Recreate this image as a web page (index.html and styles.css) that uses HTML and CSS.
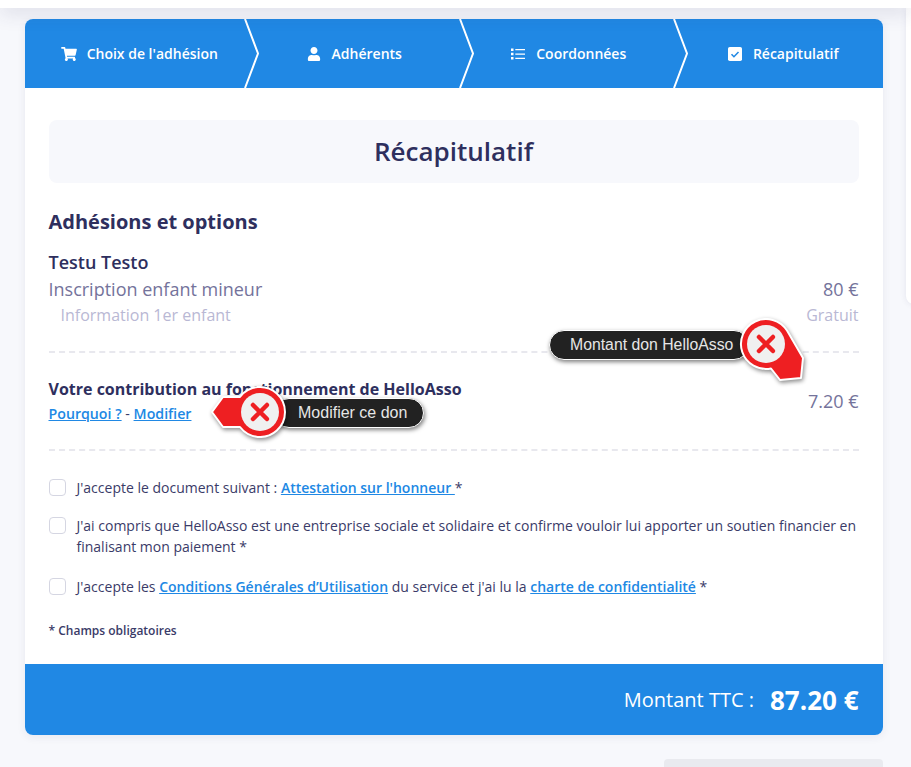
FILE: index.html
```html
<!DOCTYPE html>
<html lang="fr">
<head>
    <meta charset="UTF-8">
    <meta name="viewport" content="width=device-width, initial-scale=1.0">
    <title>Récapitulatif</title>
    <link rel="stylesheet" href="styles.css">
</head>
<body>
    <div class="topbar"></div>
    <div class="side-card"></div>
    <main class="page">
        <section class="card">
            <nav class="steps">
                <div class="step">
                    <svg class="step-icon" viewBox="0 0 576 512"><path fill="#fff" d="M528 301.3l47.3-208C578.7 78.3 567.300 64 552 64H159.200l-9.200-44.800C147.800 8 137.900 0 126.500 0H24C10.700 0 0 10.700 0 24v16c0 13.300 10.700 24 24 24h69.900l70.200 343.400C147.300 417.100 136 435.200 136 456c0 30.900 25.100 56 56 56s56-25.100 56-56c0-15.700-6.400-29.800-16.800-40h209.600C430.400 426.200 424 440.300 424 456c0 30.900 25.100 56 56 56s56-25.100 56-56c0-22.200-12.900-41.300-31.600-50.400l5.500-24.300c3.400-15-8-29.300-23.400-29.300H218.100l-6.500-32h293c11.200 0 20.900-7.800 23.400-18.700z"/></svg>
                    <span>Choix de l'adhésion</span>
                </div>
                <div class="step">
                    <svg class="step-icon" viewBox="0 0 448 512"><path fill="#fff" d="M224 256c70.700 0 128-57.300 128-128S294.700 0 224 0 96 57.300 96 128s57.300 128 128 128zm89.600 32h-16.700c-22.200 10.200-46.900 16-72.900 16s-50.600-5.800-72.900-16h-16.700C60.200 288 0 348.200 0 422.400V464c0 26.500 21.500 48 48 48h352c26.500 0 48-21.500 48-48v-41.600c0-74.200-60.200-134.400-134.400-134.400z"/></svg>
                    <span>Adhérents</span>
                </div>
                <div class="step">
                    <svg class="step-icon" viewBox="0 0 14 14"><path fill="#fff" d="M0 1.500h2.500v2.500H0zM0 5.800h2.500v2.500H0zM0 10h2.500v2.500H0zM4.300 2h9.700v1.300H4.300zM4.300 6.400h9.700v1.300H4.300zM4.300 10.700h9.700V12H4.300z"/></svg>
                    <span>Coordonnées</span>
                </div>
                <div class="step">
                    <svg class="step-icon" viewBox="0 0 12 12"><rect width="12" height="12" rx="1.500" fill="#fff"/><path d="M3 6.200l2.100 2.100L9 4.300" fill="none" stroke="#2088e4" stroke-width="1.300"/></svg>
                    <span>Récapitulatif</span>
                </div>
                <svg class="chevron chevron-1" viewBox="0 0 16 69"><path d="M1 0l13 34.500L1 69" fill="none" stroke="#fff" stroke-width="2"/></svg>
                <svg class="chevron chevron-2" viewBox="0 0 16 69"><path d="M1 0l13 34.500L1 69" fill="none" stroke="#fff" stroke-width="2"/></svg>
                <svg class="chevron chevron-3" viewBox="0 0 16 69"><path d="M1 0l13 34.500L1 69" fill="none" stroke="#fff" stroke-width="2"/></svg>
            </nav>

            <div class="content">
                <h1 class="title">Récapitulatif</h1>
                <h2 class="section-title">Adhésions et options</h2>
                <p class="member">Testu Testo</p>
                <div class="line-row">
                    <span>Inscription enfant mineur</span>
                    <span>80 €</span>
                </div>
                <div class="option-row">
                    <span>Information 1er enfant</span>
                    <span>Gratuit</span>
                </div>
                <div class="contribution">
                    <div>
                        <p class="contribution-title">Votre contribution au fonctionnement de HelloAsso</p>
                        <p class="contribution-links"><a href="#">Pourquoi ?</a> - <a href="#">Modifier</a></p>
                    </div>
                    <span class="contribution-amount">7.20 €</span>
                </div>
                <label class="check-row">
                    <span class="checkbox"></span>
                    <span>J'accepte le document suivant : <a href="#">Attestation sur l'honneur </a>*</span>
                </label>
                <label class="check-row">
                    <span class="checkbox"></span>
                    <span>J'ai compris que HelloAsso est une entreprise sociale et solidaire et confirme vouloir lui apporter un soutien financier en finalisant mon paiement *</span>
                </label>
                <label class="check-row">
                    <span class="checkbox"></span>
                    <span>J'accepte les <a href="#">Conditions Générales d’Utilisation</a> du service et j'ai lu la <a href="#">charte de confidentialité</a> *</span>
                </label>
                <p class="required">* Champs obligatoires</p>
            </div>

            <div class="total">
                <span class="total-label">Montant TTC :</span>
                <span class="total-value">87.20 €</span>
            </div>
        </section>
        <div class="next-button"></div>
    </main>

    <!-- annotation callouts laid over the page -->
    <div class="note note-amount">
        <span class="note-label">Montant don HelloAsso</span>
        <svg class="note-pin" viewBox="0 0 76 76">
            <path d="M53 17.500L69 45l-2 20-21 2-9-11.500A25 25 0 1 1 53 17.500z" fill="#ee1f22" stroke="#fff" stroke-width="2" stroke-linejoin="round"/>
            <circle cx="32" cy="31" r="19" fill="#f0f0f0"/>
            <path d="M25 24l14 14M39 24L25 38" stroke="#ee1f22" stroke-width="4.500" stroke-linecap="round"/>
        </svg>
    </div>
    <div class="note note-edit">
        <svg class="note-pin" viewBox="0 0 80 60">
            <path d="M4 29l11-15h17a25 25 0 1 1 0 30H15z" fill="#ee1f22" stroke="#fff" stroke-width="2" stroke-linejoin="round"/>
            <circle cx="52" cy="29" r="19" fill="#f0f0f0"/>
            <path d="M45 22l14 14M59 22L45 36" stroke="#ee1f22" stroke-width="4.500" stroke-linecap="round"/>
        </svg>
        <span class="note-label">Modifier ce don</span>
    </div>
</body>
</html>
```

FILE: styles.css
```css
* { box-sizing: border-box; }
body { margin: 0; height: 767px; overflow: hidden; background: #f7f8fc; font-family: "Open Sans", sans-serif; color: #2e2f5e; position: relative; }
p, h1, h2 { margin: 0; }
a { color: #2088e4; font-weight: 600; text-decoration: underline; }

.topbar { height: 8px; background: #fff; box-shadow: 0 2px 20px rgba(46, 47, 94, .25); position: relative; z-index: 1; }
.side-card { position: absolute; left: 906px; top: 8px; width: 20px; height: 296px; background: #fff; border-radius: 0 0 8px 8px; box-shadow: 0 0 6px rgba(46, 47, 94, .1); }

.page { padding: 11px 28.5px 0 24.5px; }
.card { background: #fff; border-radius: 8px; box-shadow: 0 2px 8px rgba(46, 47, 94, .08); overflow: hidden; }

.steps { display: grid; grid-template-columns: repeat(4, 1fr); height: 69px; background: #2088e4; position: relative; }
.step { display: flex; align-items: center; justify-content: center; gap: 10px; color: #fff; font-size: 14px; font-weight: 600; padding-left: 15px; }
.step-icon { width: 16px; height: 14px; }
.chevron { position: absolute; top: 0; width: 16px; height: 69px; }
.chevron-1 { left: 219px; }
.chevron-2 { left: 434px; }
.chevron-3 { left: 648px; }

.content { padding: 32px 24px 0; height: 576px; }
.title { height: 63px; line-height: 62px; background: #f7f8fc; border-radius: 8px; text-align: center; font-size: 26px; font-weight: 600; }
.section-title { margin-top: 24px; font-size: 20px; line-height: 30px; font-weight: 700; }
.member { margin-top: 12px; font-size: 18px; line-height: 26px; font-weight: 600; }
.line-row { display: flex; justify-content: space-between; margin-top: 1px; font-size: 18px; line-height: 27px; color: #74739b; }
.option-row { display: flex; justify-content: space-between; padding-left: 12px; font-size: 16px; line-height: 24px; color: #b9b8d4; }

.contribution { display: flex; justify-content: space-between; align-items: flex-start; margin-top: 24px; padding-top: 24px; height: 100px; border-top: 2px dashed #e8e8ee; border-bottom: 2px dashed #e8e8ee; }
.contribution-title { font-size: 16px; line-height: 24px; font-weight: 700; }
.contribution-links { margin-top: 1px; font-size: 14.2px; line-height: 24px; color: #3a3b68; }
.contribution-amount { margin-top: 12px; font-size: 18px; line-height: 24px; color: #74739b; }

.check-row { display: flex; gap: 11px; margin-top: 17px; font-size: 14px; line-height: 21px; color: #3a3b68; }
.contribution + .check-row { margin-top: 26px; }
.check-row:last-of-type { margin-top: 19px; }
.checkbox { flex: none; width: 17px; height: 17px; margin-top: 2px; border: 1px solid #d5d6e2; border-radius: 4px; background: #fff; }
.required { margin-top: 26px; font-size: 12px; line-height: 16px; font-weight: 600; color: #3a3b68; }

.total { display: flex; justify-content: flex-end; align-items: center; gap: 16px; height: 71px; padding-right: 24px; background: #2088e4; color: #fff; }
.total-label { font-size: 20px; }
.total-value { font-size: 26px; font-weight: 700; }

.next-button { width: 219px; height: 30px; margin-top: 24px; margin-left: auto; background: #e9eaef; border-radius: 4px 4px 0 0; }

.note { position: absolute; display: flex; align-items: center; }
.note-label { height: 30px; border: 1px solid #fff; border-radius: 15px; background: #222; color: #e6e6e6; font-family: "Liberation Sans", sans-serif; font-size: 16px; line-height: 28px; white-space: nowrap; box-shadow: 1px 2px 4px rgba(0, 0, 0, .5); }
.note-pin { filter: drop-shadow(1px 2px 2px rgba(0, 0, 0, .45)); }
.note-amount { left: 549px; top: 330px; }
.note-amount .note-label { width: 200px; padding-left: 20px; font-size: 15.8px; }
.note-amount .note-pin { position: absolute; left: 185px; top: -17px; width: 76px; height: 76px; }
.note-edit { left: 208px; top: 383px; }
.note-edit .note-label { padding: 0 16px 0 23px; margin-left: -14px; }
.note-edit .note-pin { width: 80px; height: 60px; position: relative; z-index: 1; }
```
